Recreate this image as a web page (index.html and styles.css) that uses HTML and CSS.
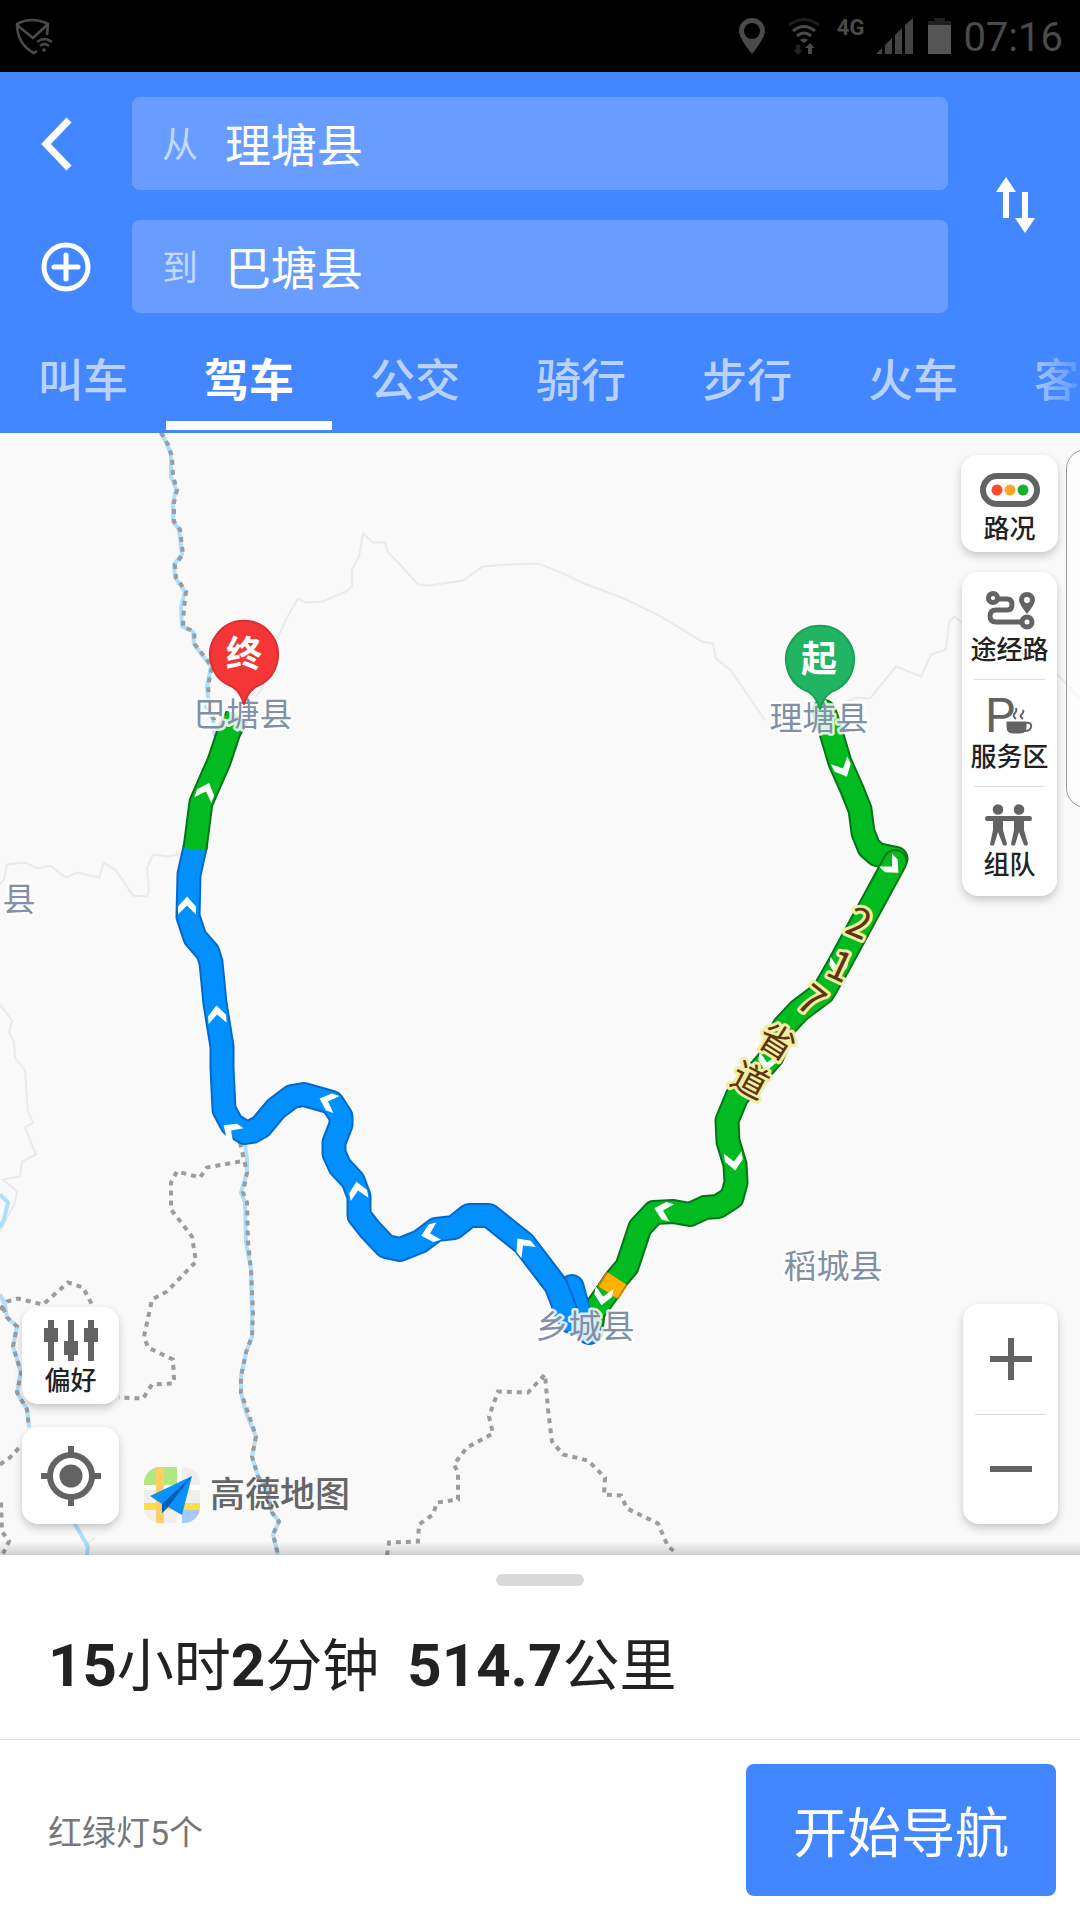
FILE: index.html
```
<!DOCTYPE html>
<html lang="zh-CN">
<head>
    <meta charset="UTF-8">
    <meta name="viewport" content="width=device-width, initial-scale=1.0">
    <title>高德地图</title>
    <link rel="stylesheet" href="styles.css">
</head>
<body>
    <div class="status-bar">
        <svg class="status-shield" width="38" height="38" viewBox="0 0 38 38" fill="none" stroke="#4a4a4a" stroke-width="2.6">
            <path d="M32 18l1-11Q17-1 2 7q0 20 17 29l3-2M2 8l16 13L32 8"/>
            <path d="M22 25q7-6 15 0M25 29q4-4 9 0" stroke-width="2.2"/>
            <circle cx="29" cy="33" r="1.8" fill="#4a4a4a" stroke="none"/>
        </svg>
        <svg width="26" height="36" viewBox="0 0 26 36">
            <path d="M13 0a13 13 0 0 1 13 13q0 7-13 23Q0 20 0 13A13 13 0 0 1 13 0zm0 5a8 8 0 1 0 0 16 8 8 0 0 0 0-16z" fill="#4a4a4a"/>
        </svg>
        <svg class="status-wifi" width="32" height="37" viewBox="0 0 32 37" fill="none" stroke="#4a4a4a" stroke-width="3">
            <path d="M1 7q15-11 30 0" stroke="#1e1e1e"/>
            <path d="M5 13q11-9 22 0M9 18q7-6 14 0"/>
            <path d="M16 25l-4-3q4-3 8 0zM22 25l5 5h-3v6h-4v-6h-3z" fill="#4a4a4a" stroke="none"/>
            <path d="M10 37l-5-5h3v-5h4v5h3z" fill="#222" stroke="none"/>
        </svg>
        <span class="status-net">4G</span>
        <svg width="37" height="36" viewBox="0 0 37 36" fill="#444">
            <path d="M0 36l6-6v6zM9 27l7-7v16H9zM19 17l7-7v26h-7zM29 7l8-7v36h-8z"/>
        </svg>
        <svg width="23" height="36" viewBox="0 0 23 36">
            <path d="M6 0h11v3h6v4H0V3h6z" fill="#1e1e1e"/>
            <path d="M0 7h23v29H0z" fill="#555"/>
        </svg>
        <time class="status-time">07:16</time>
    </div>

    <header class="header">
        <div class="route-form">
            <button class="icon-button back" aria-label="返回">
                <svg width="50" height="54" viewBox="0 0 50 54" fill="none" stroke="#fff" stroke-width="7">
                    <path d="M28 3L5 27l23 24"/>
                </svg>
            </button>
            <div class="field">
                <label for="from">从</label>
                <input id="from" type="text" value="理塘县">
            </div>
            <button class="icon-button swap" aria-label="交换起点和终点">
                <svg width="42" height="56" viewBox="0 0 42 56" fill="#fff">
                    <path d="M13 0l10 15h-7v26h-6V15H3zM32 56L22 41h7V15h6v26h7z"/>
                </svg>
            </button>
            <button class="icon-button" aria-label="添加途经点">
                <svg width="50" height="50" viewBox="0 0 50 50" fill="none" stroke="#fff" stroke-width="5" stroke-linecap="round">
                    <circle cx="25" cy="25" r="22"/>
                    <path d="M13 25h24M25 13v24"/>
                </svg>
            </button>
            <div class="field">
                <label for="to">到</label>
                <input id="to" type="text" value="巴塘县">
            </div>
        </div>
        <nav class="tabs">
            <button class="tab">叫车</button>
            <button class="tab active">驾车</button>
            <button class="tab">公交</button>
            <button class="tab">骑行</button>
            <button class="tab">步行</button>
            <button class="tab">火车</button>
            <button class="tab">客车</button>
        </nav>
    </header>

    <main class="map">
        <svg class="map-canvas" viewBox="0 433 1080 1123" preserveAspectRatio="xMidYMid slice">
            <defs>
                <path id="chevron" d="M0-9L9 1v8L0 0l-9 9V1z" fill="#fff"/>
                <path id="pin" d="M0 50Q-3 38-12 32A34 34 0 1 1 12 32Q3 38 0 50z"/>
            </defs>

            <!-- minor roads -->
            <g class="road">
                <path d="M255 698l7-8 3-20 12-30 10-22 11-19 7 4 18-1 23-10 6-5v-17l7-13 4-23 10 9h12l3 10 12 12 18 20 12 1 33-5 20-14 26-2 30-1 24 10 21 10 22 8 18 7 35 17 43 26 11 2 3 15 15 12 34 50"/>
                <path d="M847 702l10-4 13 1 26-32 25 10 10-22 15-5 3-27 5-6 8 6 94 50 11 12 13 15"/>
                <path d="M0 885l4-5 3-15 18-2 13 6 12-3 16 12 11-5 22 5 5-15 12 8 17 25 14 1 2-7-2-22 6-13 15 2 14-3"/>
                <path d="M0 1005l12 16-3 12 5 9 1 16 10 13 3 41 5 11-8 5 11 27-14 7-2 15-17 3 14 12-2 11-15 29"/>
                <path d="M84 1547l11-9"/>
            </g>

            <!-- rivers -->
            <g class="river">
                <path d="M161 433l6 12 4 10v22l5 13-3 13v19l6 8 3 25-8 10 1 13 10 14-4 16 1 19 11 5 1 13 17 22-4 20 1 10-2 10 7 13 2 17"/>
                <path d="M245 1145l2 15v13l-6 20 4 10 1 40 5 27 1 43v24l-6 16-5 24v16l5 20 10 24-4 20 6 20 9 13 5 23 7 9-6 13 5 20"/>
                <path d="M0 1295l5 10 2 13 10 9-4 20 8 26-4 20 10 17 2 18M74 1523l14 24-1 9"/>
                <path d="M0 1195l8 8-4 17-4 8"/>
            </g>

            <!-- province borders -->
            <g class="border">
                <path d="M161 433l7 12 4 12 1 20 4 13-3 13v19l6 8 3 25-8 10 1 13 10 14-2 16-1 19 11 5 1 13 17 22-4 20 1 10-2 10 7 13 2 17"/>
                <path d="M240 1143l4 17 3 13-4 20 4 10 1 40 3 27 2 43-1 24-6 16-5 24v16l7 20 8 24-4 20 6 20 9 13 5 23 7 9-6 13 5 20"/>
                <path d="M240 1162l-33 6-7 10-23-6-6 11v27l21 27 4 25-29 30-15 8-8 37 4 11 25 12 1 20-1 4-21 1-9 14-24-1"/>
                <path d="M0 1310l7-8 11-3 25 6 25-22 15 5 10 19M3 1308l4 10 10 9-4 20 8 26-4 20 10 17 2 18"/>
                <path d="M0 1465l10-7 12-13M1 1503l1 29 7 10-6 12"/>
                <path d="M387 1556l2-13 29-1 1-17 14-10 4-12 21-3v-27l-4-8 13-17 26-14-4-17 9-25 30 1 17-18 3 35 4 32 11 13 25 6 17 17-1 17 17 1 6 13 31 15 10 23 9 7"/>
            </g>

            <!-- route: each part is a dark casing with the fill on top -->
            <g class="route">
                <path class="green-edge" d="M824 712l4 11 12 40 12 27 8 20 3 23 6 15 8 7 19 4"/>
                <path class="green-fill" d="M824 712l4 11 12 40 12 27 8 20 3 23 6 15 8 7 19 4"/>
                <path class="green-edge" d="M895 862l-57 105-15 26-24 18-15 16-12 30-35 40-10 24 1 21 7 23 1 18-4 15-14 9-13 1-15 7-17-3-19 1-14 15-13 39-11 13-8 12-15 21-2 19"/>
                <path class="green-fill" d="M895 862l-57 105-15 26-24 18-15 16-12 30-35 40-10 24 1 21 7 23 1 18-4 15-14 9-13 1-15 7-17-3-19 1-14 15-13 39-11 13-8 12-15 21-2 19"/>
                <path class="orange-edge" d="M617 1279l-9 14"/>
                <path class="orange-fill" d="M617 1279l-9 14"/>
                <path class="blue-edge" d="M589 1333l-10-20-7-26"/>
                <path class="blue-fill" d="M589 1333l-10-20-7-26"/>
                <path class="blue-edge" d="M571 1322l-3-5-12-31-32-42-35-28h-20l-15 12-18 2-16 12-20 8-14-3-16-17-11-14v-19l-6-16-13-14-6-13v-11l7-18v-8l-9-14-28-8-12 2-16 12-15 18-9 5-7 1-13-8-8-15-2-42v-21l-7-43-4-41-3-10-13-15-7-21 1-42 6-27"/>
                <path class="blue-fill" d="M571 1322l-3-5-12-31-32-42-35-28h-20l-15 12-18 2-16 12-20 8-14-3-16-17-11-14v-19l-6-16-13-14-6-13v-11l7-18v-8l-9-14-28-8-12 2-16 12-15 18-9 5-7 1-13-8-8-15-2-42v-21l-7-43-4-41-3-10-13-15-7-21 1-42 6-27"/>
                <path class="green-edge butt" d="M195 849l6-46 18-41 10-30 8-15"/>
                <path class="green-fill butt" d="M195 850l6-47 18-41 10-30 8-16"/>
            </g>

            <g>
                <use href="#chevron" transform="translate(843 769) rotate(155)"/>
                <use href="#chevron" transform="translate(892 867) rotate(135)"/>
                <use href="#chevron" transform="translate(838 968) rotate(190)"/>
                <use href="#chevron" transform="translate(767 1063) rotate(190)"/>
                <use href="#chevron" transform="translate(734 1162) rotate(172)"/>
                <use href="#chevron" transform="translate(663 1211) rotate(-75)"/>
                <use href="#chevron" transform="translate(603 1297) rotate(190)"/>
                <use href="#chevron" transform="translate(523 1246) rotate(-38)"/>
                <use href="#chevron" transform="translate(430 1234) rotate(-105)"/>
                <use href="#chevron" transform="translate(358 1191) rotate(-10)"/>
                <use href="#chevron" transform="translate(328 1102) rotate(-70)"/>
                <use href="#chevron" transform="translate(231 1131) rotate(-55)"/>
                <use href="#chevron" transform="translate(217 1015) rotate(-4)"/>
                <use href="#chevron" transform="translate(187 906)"/>
                <use href="#chevron" transform="translate(206 792) rotate(20)"/>
            </g>

            <g class="road-name">
                <text class="digit" transform="translate(859 924) rotate(23)" y="14">2</text>
                <text class="digit" transform="translate(840 967) rotate(25)" y="14">1</text>
                <text class="digit" transform="translate(811 1001) rotate(38)" y="14">7</text>
                <text transform="translate(777 1042) rotate(32)" y="13">省</text>
                <text transform="translate(750 1081) rotate(28)" y="13">道</text>
            </g>

            <g class="place">
                <text x="243" y="726">巴塘县</text>
                <text x="819" y="730">理塘县</text>
                <text x="585" y="1338">乡城县</text>
                <text x="833" y="1278">稻城县</text>
                <text x="19" y="911">县</text>
            </g>

            <g class="pin">
                <use href="#pin" x="244" y="655" fill="#f43636" stroke="#d92f33"/>
                <text x="244" y="667">终</text>
                <use href="#pin" x="820" y="660" fill="#20b463" stroke="#1a9f55"/>
                <text x="819" y="672">起</text>
            </g>
        </svg>

        <div class="side-panel"></div>

        <div class="controls controls-top">
            <button class="card card-square">
                <svg width="60" height="42" viewBox="0 0 60 42">
                    <rect x="3" y="8" width="54" height="28" rx="14" fill="#fff" stroke="#636363" stroke-width="6"/>
                    <circle cx="17" cy="22" r="5.5" fill="#ff4a2b"/>
                    <circle cx="30" cy="22" r="5.5" fill="#ffa327"/>
                    <circle cx="43" cy="22" r="5.5" fill="#1bb02b"/>
                </svg>
                路况
            </button>
            <div class="card">
                <button class="card-item">
                    <svg width="50" height="42" viewBox="0 0 50 42" fill="none" stroke="#636363" stroke-width="5">
                        <circle cx="8" cy="9" r="4.6"/>
                        <path d="M13 10h9q5 0 5 5.500t-5 5.500h-11q-6 0-6 6t6 6h27"/>
                        <circle cx="42" cy="33" r="5"/>
                        <path d="M42 3a8 8 0 0 1 8 8q0 4-8 14-8-10-8-14a8 8 0 0 1 8-8zm0 5a3 3 0 1 0 0 6 3 3 0 0 0 0-6z" fill="#636363" stroke="none"/>
                    </svg>
                    途经路
                </button>
                <button class="card-item">
                    <svg width="50" height="42" viewBox="0 0 50 42" fill="#636363">
                        <text class="parking" x="0" y="36">P</text>
                        <path d="M21 25h21v6q0 7-7 7h-7q-7 0-7-7z" stroke="#fff" stroke-width="1"/>
                        <path d="M41 27q6-1 5 4-1 4-6 4M31 23q-4-3-1-6 2-2 1-5M38 23q-4-3-1-5 2-2 1-4" fill="none" stroke="#636363" stroke-width="2"/>
                    </svg>
                    服务区
                </button>
                <button class="card-item">
                    <svg width="50" height="42" viewBox="0 0 50 42" fill="#636363">
                        <g transform="translate(-1 0)">
                            <circle cx="14" cy="5.500" r="5.300"/>
                            <circle cx="35" cy="5.500" r="5.300"/>
                            <path d="M3 12h43q2 0 2 2.500t-2 2.500h-6v9l4 14q-1 3-4 1l-5-13-4 13q-3 2-4-1l3-14v-9H19v9l4 14q-1 3-4 1l-5-13-4 13q-3 2-4-1l3-14v-9H3q-2 0-2-2.500t2-2.500z"/>
                        </g>
                    </svg>
                    组队
                </button>
            </div>
        </div>

        <div class="controls controls-left">
            <button class="card card-square">
                <svg width="60" height="42" viewBox="0 0 60 42" fill="#636363">
                    <path d="M7 0h6v8h4v14h-4v19H7V22H3V8h4zM27 0h6v21h4v14h-4v6h-6v-6h-4V21h4zM47 0h6v8h4v14h-4v19h-6V22h-4V8h4z"/>
                </svg>
                偏好
            </button>
            <button class="card card-square locate" aria-label="定位">
                <svg width="60" height="60" viewBox="0 0 60 60" fill="none" stroke="#636363" stroke-width="6">
                    <circle cx="30" cy="30" r="21"/>
                    <path d="M30 0v7M30 53v7M0 30h7M53 30h7"/>
                    <circle cx="30" cy="30" r="11.500" fill="#636363" stroke="none"/>
                </svg>
            </button>
        </div>

        <div class="controls controls-zoom">
            <div class="card">
                <button class="zoom-button" aria-label="放大">
                    <svg width="42" height="42" viewBox="0 0 42 42" fill="#636363"><path d="M18 0h6v18h18v6H24v18h-6V24H0v-6h18z"/></svg>
                </button>
                <button class="zoom-button" aria-label="缩小">
                    <svg width="42" height="42" viewBox="0 0 42 42" fill="#636363"><path d="M0 18h42v6H0z"/></svg>
                </button>
            </div>
        </div>

        <div class="logo">
            <svg width="56" height="56" viewBox="0 0 56 56">
                <clipPath id="logo-clip"><rect width="56" height="56" rx="16"/></clipPath>
                <g clip-path="url(#logo-clip)">
                    <path d="M0 0h56v56H0z" fill="#f0efeb"/>
                    <path d="M0 0h33v18H0z" fill="#b0e880"/>
                    <path d="M38 43h18v13H38z" fill="#a6c9ff"/>
                    <path d="M33 0h5v56h-5zM0 18h56v5H0z" fill="#fff"/>
                    <path d="M0 36h56v7H0z" fill="#ffdd48"/>
                    <path d="M12 0h8v56h-8z" fill="#ffcf66"/>
                </g>
                <path d="M48 9L6 29l12 8v9l6-6 14 8z" fill="#0991ff"/>
                <path d="M48 9L18 37v9l6-6z" fill="#0a5cae"/>
            </svg>
            <span>高德地图</span>
        </div>
    </main>

    <section class="sheet">
        <div class="handle"></div>
        <h1 class="summary">
            <span><b>15</b>小时<b>2</b>分钟</span>
            <span><b>514.7</b>公里</span>
        </h1>
        <div class="sheet-footer">
            <span class="lights">红绿灯5个</span>
            <button class="start">开始导航</button>
        </div>
    </section>
</body>
</html>
```

FILE: styles.css
```
* {
    box-sizing: border-box;
}

body {
    margin: 0;
    min-height: 100vh;
    display: flex;
    flex-direction: column;
    font-family: Roboto, "Noto Sans CJK SC", sans-serif;
    background: #fff;
    color: #222;
}

button,
input {
    font: inherit;
    color: inherit;
    border: 0;
    padding: 0;
    background: none;
}

svg {
    display: block;
    flex-shrink: 0;
}

/* Status bar */
.status-bar {
    display: flex;
    align-items: center;
    height: 72px;
    padding: 0 17px 0 15px;
    background: #000;
    color: #4a4a4a;
}

.status-shield {
    margin-right: auto;
}

.status-wifi {
    margin-left: 23px;
}

.status-net {
    margin: 0 12px 16px 17px;
    font-size: 22px;
    font-weight: 700;
    line-height: 24px;
}

.status-bar svg + svg:nth-last-child(2) {
    margin-left: 15px;
}

.status-time {
    margin-left: 12px;
    padding-top: 3px;
    font-size: 40px;
    line-height: 48px;
}

/* Header */
.header {
    background: #4287ff;
    color: #fff;
}

.route-form {
    display: grid;
    grid-template-columns: 132px 1fr 132px;
    row-gap: 30px;
    padding: 25px 0 12px;
}

.icon-button {
    display: flex;
    align-items: center;
    justify-content: center;
}

.swap {
    grid-column: 3;
    grid-row: 1 / 3;
}

.field {
    display: flex;
    align-items: center;
    gap: 27px;
    height: 93px;
    padding: 0 30px 3px;
    border-radius: 8px;
    background: #689dff;
}

.field label {
    font-size: 36px;
    color: #c3d8ff;
}

.field input {
    flex: 1;
    min-width: 0;
    font-size: 46px;
    outline: none;
}

.tabs {
    position: relative;
    display: flex;
    height: 108px;
    overflow: hidden;
}

.tabs::after {
    content: "";
    position: absolute;
    top: 0;
    right: 0;
    width: 56px;
    height: 100%;
    background: linear-gradient(to right, rgba(66, 135, 255, 0), rgba(66, 135, 255, 0.8));
}

.tab {
    position: relative;
    flex: 0 0 166px;
    padding-bottom: 4px;
    font-size: 45px;
    font-weight: 500;
    color: #b9d2ff;
}

.tab.active {
    font-weight: 700;
    color: #fff;
}

.tab.active::after {
    content: "";
    position: absolute;
    left: 0;
    right: 0;
    bottom: 3px;
    height: 9px;
    background: #fff;
}

/* Map */
.map {
    position: relative;
    flex: 1;
    min-height: 1000px;
    overflow: hidden;
    background: #f9f9f9;
}

.map::after {
    content: "";
    position: absolute;
    left: 0;
    right: 0;
    bottom: 0;
    height: 14px;
    background: linear-gradient(rgba(0, 0, 0, 0), rgba(0, 0, 0, 0.16));
}

.map-canvas {
    position: absolute;
    width: 100%;
    height: 100%;
}

.road path {
    fill: none;
    stroke: #e9eae9;
    stroke-width: 2;
}

.river path {
    fill: none;
    stroke: #acdfff;
    stroke-width: 4;
    stroke-linejoin: round;
}

.border path {
    fill: none;
    stroke: #9c9c9c;
    stroke-width: 4;
    stroke-dasharray: 5 5;
}

.route path {
    fill: none;
    stroke-width: 21;
    stroke-linecap: round;
    stroke-linejoin: round;
}

.route .green-edge {
    stroke: #067516;
    stroke-width: 25;
}

.route .green-fill {
    stroke: #02bb20;
}

.route .blue-edge {
    stroke: #0568cb;
    stroke-width: 25;
}

.route .blue-fill {
    stroke: #0290ff;
}

.route .orange-edge {
    stroke: #cc7f0a;
    stroke-width: 25;
    stroke-linecap: butt;
}

.route .orange-fill {
    stroke: #ffb300;
    stroke-linecap: butt;
}

.route .butt {
    stroke-linecap: butt;
}

.road-name text {
    font-family: "Noto Sans CJK SC", sans-serif;
    font-size: 36px;
    text-anchor: middle;
    fill: #603413;
    stroke: #f1eda2;
    stroke-width: 6px;
    stroke-linejoin: round;
    paint-order: stroke;
}

.road-name .digit {
    font-size: 40px;
}

.place text {
    font-size: 33px;
    text-anchor: middle;
    fill: #8090a5;
    stroke: rgba(255, 255, 255, 0.85);
    stroke-width: 5px;
    stroke-linejoin: round;
    paint-order: stroke;
}

.pin use {
    stroke-width: 2px;
}

.pin text {
    font-size: 36px;
    font-weight: 700;
    text-anchor: middle;
    fill: #fff;
}

.side-panel {
    position: absolute;
    top: 16px;
    right: -26px;
    width: 40px;
    height: 359px;
    border: 1px solid #999;
    border-radius: 20px;
    background: rgba(255, 255, 255, 0.6);
}

/* Map controls */
.controls {
    position: absolute;
    display: flex;
    flex-direction: column;
    align-items: center;
}

.controls-top {
    top: 22px;
    right: 22px;
    gap: 20px;
}

.controls-left {
    left: 22px;
    bottom: 31px;
    gap: 23px;
}

.controls-zoom {
    right: 22px;
    bottom: 31px;
}

.card {
    width: 95px;
    border-radius: 16px;
    background: #fff;
    box-shadow: 0 4px 8px rgba(0, 0, 0, 0.2);
    font-size: 26px;
    font-weight: 500;
    line-height: 32px;
}

.card-square,
.card-item {
    display: flex;
    flex-direction: column;
    align-items: center;
    gap: 3px;
}

.card-square {
    width: 97px;
    height: 97px;
    padding-top: 13px;
}

.card-item {
    position: relative;
    width: 100%;
    padding: 17px 0 13px;
}

.card-item:last-child {
    padding: 18px 0 15px;
}

.card-item + .card-item::before,
.zoom-button + .zoom-button::before {
    content: "";
    position: absolute;
    top: 0;
    left: 12px;
    right: 12px;
    height: 1px;
    background: #ddd;
}

.locate {
    justify-content: center;
    padding: 0;
}

.parking {
    font-family: Roboto, sans-serif;
    font-size: 48px;
    font-weight: 400;
}

.zoom-button {
    position: relative;
    display: flex;
    align-items: center;
    justify-content: center;
    width: 100%;
    height: 110px;
}

.logo {
    position: absolute;
    left: 144px;
    bottom: 31px;
    display: flex;
    align-items: center;
    gap: 10px;
    font-size: 35px;
    font-weight: 500;
    line-height: 56px;
    color: #666;
}

.logo span {
    padding-top: 3px;
}

/* Bottom sheet */
.sheet {
    background: #fff;
}

.handle {
    width: 88px;
    height: 12px;
    margin: 19px auto 0;
    border-radius: 6px;
    background: #dadada;
}

.summary {
    display: flex;
    gap: 28px;
    margin: 0;
    padding: 38px 48px 30px;
    font-size: 57px;
    font-weight: 400;
    line-height: 84px;
}

.summary b {
    font-size: 60px;
}

.sheet-footer {
    display: flex;
    align-items: center;
    justify-content: space-between;
    padding: 24px 24px 24px 48px;
    border-top: 1px solid #ddd;
}

.lights {
    font-size: 34px;
    color: #777;
}

.start {
    width: 310px;
    height: 132px;
    padding-bottom: 2px;
    border-radius: 8px;
    background: #4287ff;
    font-size: 54px;
    color: #fff;
}
```
